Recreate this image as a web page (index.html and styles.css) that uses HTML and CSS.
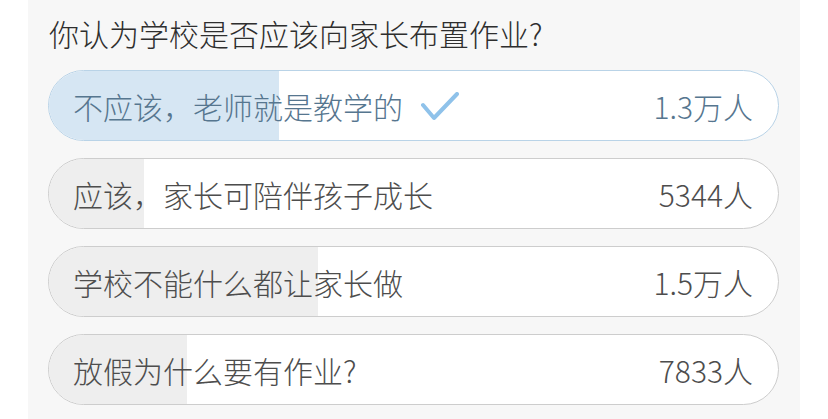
FILE: index.html
```html
<!DOCTYPE html>
<html lang="zh-CN">
<head>
<meta charset="utf-8">
<title>投票</title>
<link rel="stylesheet" href="styles.css">
</head>
<body>
<div class="panel">
  <h1 class="title">你认为学校是否应该向家长布置作业?</h1>
  <div class="options">
    <div class="pill pill--chosen">
      <div class="fill" style="width: 31.6%"></div>
      <span class="label">不应该，老师就是教学的<svg class="check" width="38" height="30" viewBox="0 0 38 30"><path d="M2 13 L13 26 L36 2" fill="none" stroke="#8fc2ea" stroke-width="4" stroke-linecap="round" stroke-linejoin="round"/></svg></span>
      <span class="count">1.3万人</span>
    </div>
    <div class="pill">
      <div class="fill" style="width: 13%"></div>
      <span class="label">应该，家长可陪伴孩子成长</span>
      <span class="count">5344人</span>
    </div>
    <div class="pill">
      <div class="fill" style="width: 36.9%"></div>
      <span class="label">学校不能什么都让家长做</span>
      <span class="count">1.5万人</span>
    </div>
    <div class="pill">
      <div class="fill" style="width: 18.9%"></div>
      <span class="label">放假为什么要有作业?</span>
      <span class="count">7833人</span>
    </div>
  </div>
</div>
</body>
</html>
```
FILE: styles.css
```css
html, body {
  margin: 0;
  padding: 0;
  background: #ffffff;
}
body {
  font-family: "Noto Sans CJK SC", "Noto Sans", sans-serif;
  font-weight: 300;
  height: 419px;
  overflow: hidden;
}
.panel {
  margin: 0 28px;
  height: 419px;
  background: #f7f7f7;
  padding: 12px 21px 0 20px;
  box-sizing: border-box;
}
.title {
  margin: 0 0 16px 1px;
  font-size: 30px;
  font-weight: 300;
  line-height: 42px;
  color: #2e2e2e;
  white-space: nowrap;
}
.options {
  display: flex;
  flex-direction: column;
  gap: 17px;
}
.pill {
  position: relative;
  height: 71px;
  box-sizing: border-box;
  border: 1px solid #cdcdcd;
  border-radius: 36px;
  background: #ffffff;
  overflow: hidden;
  display: flex;
  align-items: center;
  justify-content: space-between;
  padding: 0 25px 0 24px;
  font-size: 30px;
  color: #4d4d4d;
}
.fill {
  position: absolute;
  left: 0;
  top: 0;
  bottom: 0;
  background: #eeeeee;
}
.pill--chosen {
  border-color: #b9d3e7;
  color: #56768f;
}
.pill--chosen .fill {
  background: #d6e6f3;
}
.label, .count {
  position: relative;
  line-height: 40px;
  white-space: nowrap;
  display: flex;
  align-items: center;
}
.check {
  margin-left: 18px;
  margin-top: 2px;
}
```
